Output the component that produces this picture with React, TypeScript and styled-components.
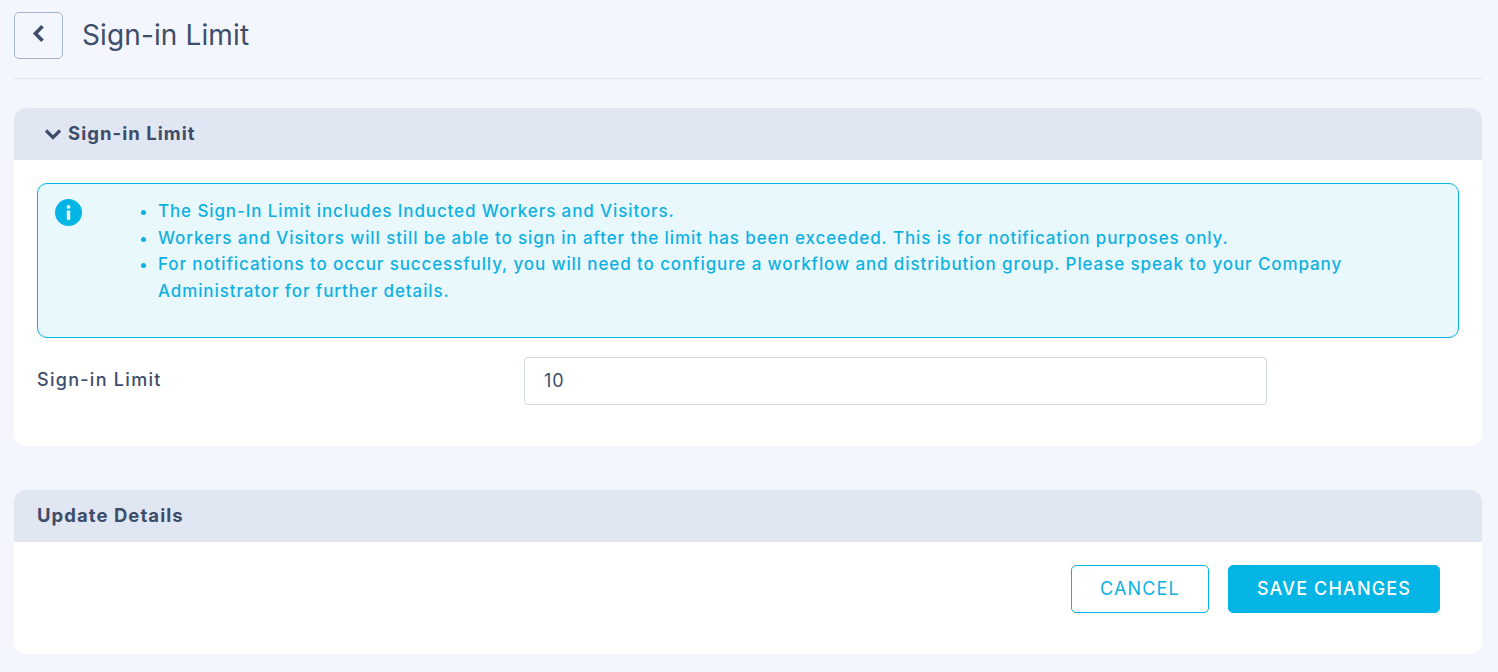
import React from "react";
import styled, { createGlobalStyle } from "styled-components";

const Global = createGlobalStyle`
  html, body { margin: 0; padding: 0; background: #f3f6fd; }
  body { font-family: Inter, "Open Sans", sans-serif; color: #3d4d6a; }
  * { box-sizing: border-box; }
`;
const Page = styled.div`
  width: 1498px;
  height: 672px;
  padding: 12px 16px 0 14px;
  overflow: hidden;
`;
const TitleBar = styled.header`
  display: flex;
  align-items: center;
  gap: 19px;
  height: 67px;
  padding-bottom: 20px;
  border-bottom: 1px solid #dfe2e8;
`;
const BackButton = styled.button`
  width: 49px;
  height: 47px;
  padding: 0 0 3px;
  display: flex;
  align-items: center;
  justify-content: center;
  background: transparent;
  border: 1px solid #a3b5d6;
  border-radius: 5px;
  color: #3d4d6a;
`;
const Title = styled.h1`
  margin: 0;
  padding-top: 1px;
  font-size: 28px;
  line-height: 47px;
  font-weight: 400;
  letter-spacing: 0.12px;
`;
const Card = styled.section<{ $height: number; $top: number }>`
  height: ${(p) => p.$height}px;
  margin-top: ${(p) => p.$top}px;
  background: #fff;
  border-radius: 12px;
  overflow: hidden;
`;
const CardHeader = styled.div`
  height: 52px;
  display: flex;
  align-items: center;
  gap: 6px;
  padding-left: 23px;
  padding-bottom: 2px;
  background: #e0e6f2;
  font-size: 18.5px;
  font-weight: 700;
  letter-spacing: 1.05px;
`;
const Chevron = styled.svg`
  margin-left: 7px;
  margin-top: 1px;
`;
const CardBody = styled.div`
  padding: 23px 23px 0;
`;
const Alert = styled.div`
  height: 155px;
  display: flex;
  padding: 14px 16px 0 17px;
  background: #e9f8fd;
  border: 1px solid #02b5e5;
  border-radius: 10px;
  color: #0eb1e1;
`;
const InfoIcon = styled.svg`
  flex: none;
  margin-top: 1px;
`;
const Notes = styled.ul`
  margin: 0;
  padding: 0 0 0 76px;
  font-size: 17px;
  line-height: 26.5px;
  font-weight: 500;
  letter-spacing: 0.89px;
`;
const Row = styled.div`
  display: flex;
  align-items: center;
  margin-top: 19px;
`;
const Label = styled.label`
  width: 487px;
  font-size: 18px;
  font-weight: 500;
  letter-spacing: 1.28px;
  padding-bottom: 3px;
`;
const Input = styled.input`
  width: 743px;
  height: 48px;
  padding: 0 19px 2px;
  border: 1px solid #d2d6df;
  border-radius: 4px;
  font: 400 18px Inter, sans-serif;
  letter-spacing: 0.9px;
  color: #3d4d6a;
  outline: none;
`;
const Actions = styled.div`
  display: flex;
  justify-content: flex-end;
  gap: 19px;
  padding: 23px 42px 0 0;
`;
const Button = styled.button<{ $primary?: boolean }>`
  height: 48px;
  width: ${(p) => (p.$primary ? 212 : 138)}px;
  padding: 0 0 1px;
  border: 1px solid #02b5e5;
  border-radius: 5px;
  background: ${(p) => (p.$primary ? "#02b5e5" : "#fff")};
  color: ${(p) => (p.$primary ? "#fff" : "#0eb1e1")};
  font: ${(p) => (p.$primary ? 500 : 400)} 18px Inter, sans-serif;
  letter-spacing: 1.15px;
`;

export default function App() {
  return (
    <>
      <Global />
      <Page>
        <TitleBar>
          <BackButton aria-label="Back">
            <svg width="13" height="19" viewBox="0 0 13 19">
              <path d="M10.5 2.2 3.4 9.5l7.1 7.3" fill="none" stroke="currentColor" strokeWidth="3.6" />
            </svg>
          </BackButton>
          <Title>Sign-in Limit</Title>
        </TitleBar>
        <Card $height={338} $top={29}>
          <CardHeader>
            <Chevron width="18" height="12" viewBox="0 0 18 12">
              <path d="M2 2.5l7 7 7-7" fill="none" stroke="currentColor" strokeWidth="3.2" />
            </Chevron>
            Sign-in Limit
          </CardHeader>
          <CardBody>
            <Alert>
              <InfoIcon width="27" height="27" viewBox="0 0 28 28">
                <circle cx="14" cy="14" r="14" fill="#02b5e5" />
                <circle cx="14" cy="8.2" r="2" fill="#e9f8fd" />
                <rect x="12.2" y="12" width="3.6" height="9.5" rx="0.6" fill="#e9f8fd" />
              </InfoIcon>
              <Notes>
                <li>The Sign-In Limit includes Inducted Workers and Visitors.</li>
                <li>Workers and Visitors will still be able to sign in after the limit has been exceeded. This is for notification purposes only.</li>
                <li>For notifications to occur successfully, you will need to configure a workflow and distribution group. Please speak to your Company Administrator for further details.</li>
              </Notes>
            </Alert>
            <Row>
              <Label>Sign-in Limit</Label>
              <Input defaultValue="10" />
            </Row>
          </CardBody>
        </Card>
        <Card $height={164} $top={44}>
          <CardHeader>Update Details</CardHeader>
          <Actions>
            <Button>CANCEL</Button>
            <Button $primary>SAVE CHANGES</Button>
          </Actions>
        </Card>
      </Page>
    </>
  );
}
